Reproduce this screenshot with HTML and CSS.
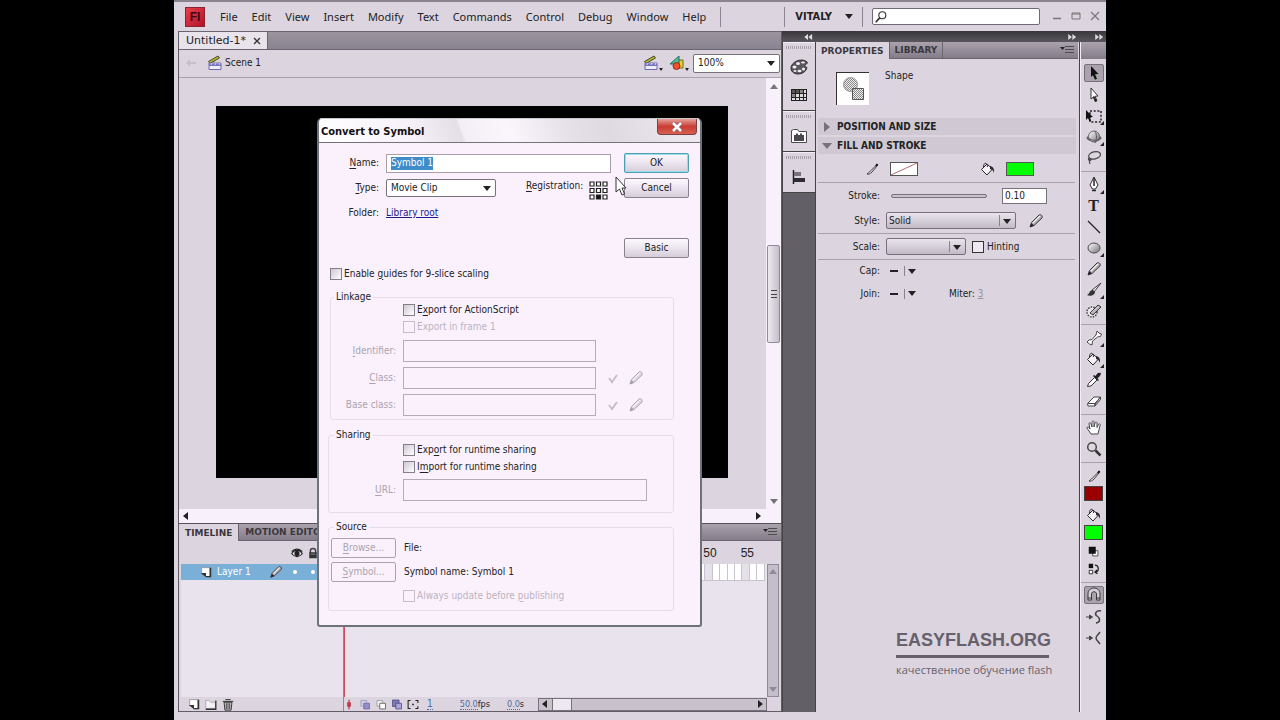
FILE: index.html
```
<!DOCTYPE html>
<html lang="en">
<head>
  <meta charset="UTF-8" />
  <meta name="viewport" content="width=device-width, initial-scale=1.0" />
  <title>Untitled-1 - Flash</title>
  <link rel="stylesheet" href="styles.css">
</head>
<body>
  <svg class="defs" aria-hidden="true">
    <defs>
      <linearGradient id="metal" x1="0" y1="0" x2="1" y2="1">
        <stop offset="0" stop-color="#fff" />
        <stop offset="1" stop-color="#77727a" />
      </linearGradient>
    </defs>
    <symbol id="i-clap" viewBox="0 0 16 16">
      <path d="M1.500 6.500L11 1l1.500 2L3 8.500z" fill="#b5b535" stroke="#4b4a20" />
      <path d="M2 8h12v6.500H2z" fill="#eeecff" stroke="#6c68ab" />
      <path d="M2 8.500h12v2.500H2z" fill="#7874bb" />
      <path d="M5 8l-1 2M9 8L8 10M13 8l-1 2" stroke="#d9d6f5" />
    </symbol>
    <symbol id="i-shapes" viewBox="0 0 16 16">
      <path d="M7 5h7v8H7z" fill="#e5cf37" stroke="#77691b" />
      <path d="M1 9L10 1v8z" fill="#4fc09a" stroke="#226d59" />
      <circle cx="7.500" cy="11" r="3.500" fill="#f0502e" stroke="#962a17" />
    </symbol>
    <symbol id="i-pencil" viewBox="0 0 16 16">
      <path d="M2 14l1.500-4.500L11 2c1.500-1 4 .5 3 3l-8 7.500z" fill="url(#metal)" stroke="#3a373c" />
      <path d="M2 14l1.500-4 2.500 2.500z" fill="#222" />
      <path d="M5 10l7-7" stroke="#fff" />
    </symbol>
    <symbol id="i-pen" viewBox="0 0 16 16">
      <path d="M3 13c1-1.500 2-1 4-3.500L12.500 4l1-.5-.5 1.500L8 11c-2 2-3.500 2.500-5 2z" fill="#eee" stroke="#39363b" />
      <path d="M12 5l1.500-2" stroke="#111" stroke-width="2" />
    </symbol>
    <symbol id="i-bucket" viewBox="0 0 16 16">
      <path d="M7 3l5.500 5L7 14 1.500 8.500z" fill="#f5f2f6" stroke="#2c292e" />
      <path d="M3.500 6c0-5 4-5 4 0" fill="none" stroke="#2c292e" />
      <path d="M10 5c3 .5 4.500 2.500 4 7-1-3-2-3.500-4-4z" fill="#2c292e" />
    </symbol>
    <symbol id="i-arrow" viewBox="0 0 16 16">
      <path d="M5 1l7.500 8-3.500.3 2 4.400-2 1-2-4.500L5 12z" fill="#111" />
    </symbol>
    <symbol id="i-subarrow" viewBox="0 0 16 16">
      <path d="M5 1l7 8-3 .3 2 4.400-1.500.8-2-4.500L5 12z" fill="#fff" stroke="#333" />
      <path d="M8 9l3 5-2 1-2-5z" fill="#222" />
    </symbol>
    <symbol id="i-transform" viewBox="0 0 16 16">
      <path d="M4 3h11v11H4z" fill="none" stroke="#222" stroke-width="1.500" stroke-dasharray="2 1.700" />
      <path d="M0 2l7 7-3 .3 1 3.500-1.500.7L2 10l-2 2z" fill="#111" />
    </symbol>
    <symbol id="i-sphere" viewBox="0 0 16 16">
      <ellipse cx="8" cy="9" rx="7" ry="3" fill="#aaa5ad" stroke="#4d494f" />
      <circle cx="8" cy="7.500" r="5.500" fill="url(#metal)" stroke="#6b676d" />
      <path d="M9 2c2 4 2 8 0 12M2 9c4 3 9 3 12 0" fill="none" stroke="#5d595f" />
    </symbol>
    <symbol id="i-lasso" viewBox="0 0 16 16">
      <ellipse cx="8.500" cy="5.500" rx="6" ry="3.500" fill="none" stroke="#4a474c" stroke-width="1.300" transform="rotate(-14 8 5)" />
      <path d="M3 8c-2 2 2 3.500 2 1.500S2 9 4 14" fill="none" stroke="#4a474c" stroke-width="1.200" />
    </symbol>
    <symbol id="i-nib" viewBox="0 0 16 16">
      <path d="M8 0l4 8-2.500 4h-3L4 8z" fill="#fff" stroke="#2b282d" />
      <path d="M8 1v6M6 13.500h4" stroke="#2b282d" stroke-width="1.500" />
      <circle cx="8" cy="8" r="1" fill="#222" />
    </symbol>
    <symbol id="i-line" viewBox="0 0 16 16"><path d="M2 2l12 12" stroke="#222" stroke-width="1.300" /></symbol>
    <symbol id="i-oval" viewBox="0 0 16 16"><ellipse cx="8" cy="8" rx="6" ry="5" fill="url(#metal)" stroke="#4b484d" /></symbol>
    <symbol id="i-brush" viewBox="0 0 16 16">
      <path d="M15 1L8 10 6 8z" fill="#f4f1f5" stroke="#3e3b40" />
      <path d="M7 8c-4 0-3 4-6 5 3 2 8 0 8-3z" fill="#333" />
    </symbol>
    <symbol id="i-spray" viewBox="0 0 16 16">
      <circle cx="6" cy="9" r="5" fill="#e9e5eb" stroke="#444" stroke-width="1.500" stroke-dasharray="1.500 1.200" />
      <path d="M4 10l8-8 3 2-8 8z" fill="url(#metal)" stroke="#39363b" />
    </symbol>
    <symbol id="i-bone" viewBox="0 0 16 16">
      <path d="M10 5l1-4 2 2 2.500 1-1 2.500-3 .5-5 4-.5 4-2.500-1L1 12l2-2 3-.5z" fill="#fff" stroke="#4c494e" />
    </symbol>
    <symbol id="i-dropper" viewBox="0 0 16 16">
      <path d="M1.500 14.500l1-3 6-6 2.500 2.500-6 6z" fill="#fff" stroke="#333" />
      <path d="M7 4l5 5 1-1-1.500-1.500C16 3 15 0 14 1c-1-1-3 0-4.500 3L8 3z" fill="#222" />
    </symbol>
    <symbol id="i-eraser" viewBox="0 0 16 16">
      <path d="M1.500 10.500L8 4h6.500L9 11v2H2z" fill="#fff" stroke="#48454a" />
      <path d="M2 10.500h7L14.500 4v2.500L9 13M9 10.500V13" fill="none" stroke="#48454a" />
    </symbol>
    <symbol id="i-hand" viewBox="0 0 16 16">
      <path d="M5 14L1 8c0-2 2-1 3 1L3 4c0-2 1.500-1.500 2 0l1 3V2.500c0-2 2-2 2 0V7l1-4c.5-2 2-1 2 0v4.500l1.500-3C13 3 14.500 4 14 5.500L12 14z" fill="#fff" stroke="#4a474c" />
    </symbol>
    <symbol id="i-zoom" viewBox="0 0 16 16">
      <circle cx="6" cy="6" r="4.300" fill="#dcd8de" stroke="#49464b" stroke-width="1.500" />
      <path d="M9.500 9.500l5 5" stroke="#353237" stroke-width="2.500" />
    </symbol>
    <symbol id="i-magnet" viewBox="0 0 16 16">
      <path d="M2 13V7c0-8 12-8 12 0v6h-3.500V7c0-3-5-3-5 0v6z" fill="#d5d0d7" stroke="#39363b" />
      <path d="M2 11h3.500M10.500 11H14" stroke="#39363b" />
    </symbol>
    <symbol id="i-smooth" viewBox="0 0 16 16">
      <path d="M0 8h6M3.500 6L6.500 8 3.500 10z" stroke="#444" fill="#444" />
      <path d="M15 2c-5-1-7 3-4 5s4 6-1 7" fill="none" stroke="#444" stroke-width="1.500" />
    </symbol>
    <symbol id="i-straight" viewBox="0 0 16 16">
      <path d="M0 8h6M3.500 6L6.500 8 3.500 10z" stroke="#444" fill="#444" />
      <path d="M14 2c-2 3-4 4-4 6s2 3 4 6" fill="none" stroke="#444" stroke-width="1.500" />
    </symbol>
    <symbol id="i-reset" viewBox="0 0 16 16">
      <path d="M6.500 6.500h6v6h-6z" fill="#fff" stroke="#444" /><path d="M2 2h8v8H2z" fill="#111" />
    </symbol>
    <symbol id="i-swap" viewBox="0 0 16 16">
      <path d="M2 2h5v5H2z" fill="#111" /><path d="M2.500 9.500h4v4h-4z" fill="#fff" stroke="#222" />
      <path d="M9 3.500c5 0 5 8 1 8M11.500 9L9 11.500l3 2" fill="none" stroke="#222" stroke-width="1.400" />
    </symbol>
    <symbol id="i-palette" viewBox="0 0 20 16">
      <path d="M2 10C1 3 13-2 18 3c2 2-3 2-2 4s3 0 1 4c-4 6-14 5-15-1z" fill="#5a565d" stroke="#2f2c31" />
      <g fill="#eee"><ellipse cx="5.500" cy="8" rx="2" ry="1.500" /><ellipse cx="9" cy="4.500" rx="2" ry="1.500" /><ellipse cx="14" cy="3.500" rx="2" ry="1" /><ellipse cx="6" cy="12" rx="1.500" ry="1" /><ellipse cx="10.500" cy="12" rx="2" ry="1.200" /><ellipse cx="14.500" cy="10" rx="1.500" ry="1.500" /></g>
    </symbol>
    <symbol id="i-swatches" viewBox="0 0 20 16">
      <path d="M2 2h16v12H2z" fill="#222" />
      <path d="M3 3h3v3H3zM7 3h3v3H7z" fill="#555" /><path d="M11 3h3v3h-3zM3 7h3v3H3z" fill="#888" />
      <path d="M15 3h2v3h-2zM7 7h3v3H7zM11 7h3v3h-3zM15 7h2v3h-2zM3 11h3v2H3zM7 11h3v2H7zM11 11h3v2h-3zM15 11h2v2h-2z" fill="#ddd" />
    </symbol>
    <symbol id="i-folder" viewBox="0 0 20 16">
      <path d="M2.500 14.500v-12l2-1h4l1.500 2h7.500v11z" fill="#fff" stroke="#4b484d" />
      <path d="M5 7h2V5.500h2V7h2V5.500h2V7h2v6H5z" fill="#4b484d" />
    </symbol>
    <symbol id="i-align" viewBox="0 0 20 16">
      <path d="M4.500 1v14" stroke="#222" stroke-width="1.500" /><path d="M5 3h7v4H5z" fill="#77737a" /><path d="M5 9h11v4H5z" fill="#2e2b33" />
    </symbol>
    <symbol id="i-page" viewBox="0 0 16 16">
      <path d="M3 3h10v10.500H8L3 9z" fill="#fff" stroke="#9a969c" />
      <path d="M2 9h6v5zM12 3h2v11H8v-1.500h4z" fill="#333" />
    </symbol>
    <symbol id="i-eye" viewBox="0 0 16 16">
      <path d="M1 9c3-6 11-6 14 0-4 5-10 5-14 0z" fill="#fff" stroke="#222" stroke-width="1.500" />
      <circle cx="8" cy="8.500" r="3.500" fill="#222" /><path d="M1 6c4-4 9-4 14 0" stroke="#222" stroke-width="1.500" fill="none" />
    </symbol>
    <symbol id="i-lock" viewBox="0 0 16 16">
      <path d="M4.500 8V5c0-4 7-4 7 0v3" fill="none" stroke="#444" stroke-width="2" /><path d="M3 7h10v8H3z" fill="#333" /><path d="M5 9h6v1H5z" fill="#999" />
    </symbol>
    <symbol id="i-dir" viewBox="0 0 16 16">
      <path d="M2 4h4l1.500 2H13v7H2z" fill="#f5f2f6" stroke="#aaa5ac" /><path d="M13.500 4v10H2" fill="none" stroke="#333" stroke-width="1.500" />
    </symbol>
    <symbol id="i-trash" viewBox="0 0 16 16">
      <path d="M3.500 6h9l-1 9h-7z" fill="#ddd" stroke="#222" /><path d="M2 5h12M5 3h6M6 7v7M8 7v7M10 7v7" stroke="#222" />
    </symbol>
    <symbol id="i-onion" viewBox="0 0 16 16">
      <path d="M3 3h7v7H3z" fill="#d4cfe6" stroke="#9c98b8" /><path d="M6.500 6.500h7v7h-7z" fill="#9490cd" stroke="#6b67a5" />
    </symbol>
    <symbol id="i-onion2" viewBox="0 0 16 16">
      <path d="M3 3h7v7H3z" fill="#eee" stroke="#999" /><path d="M6.500 6.500h7v7h-7z" fill="#fff" stroke="#555" />
    </symbol>
    <symbol id="i-onion3" viewBox="0 0 16 16">
      <path d="M2.500 2.500h8v8h-8z" fill="#7d79b5" stroke="#4f4c80" /><path d="M6.500 6.500h7v7h-7z" fill="#aaa6da" stroke="#4f4c80" />
    </symbol>
    <symbol id="i-markers" viewBox="0 0 16 16">
      <path d="M5 3H2v10h3M11 3h3v3M14 10v3h-3" fill="none" stroke="#222" stroke-width="1.300" /><path d="M7 7h2v2H7z" fill="#222" />
    </symbol>
    <symbol id="i-check" viewBox="0 0 16 16"><path d="M4 8l3 4 5-7" fill="none" stroke="#c5bec8" stroke-width="2" /></symbol>
    <symbol id="i-menu" viewBox="0 0 16 16">
      <path d="M1 5h5L3.500 8z" fill="#222" /><path d="M6 4.500h9M6 7.500h9M6 10.500h9" stroke="#4d4a50" />
    </symbol>
    <symbol id="i-left2" viewBox="0 0 16 16"><path d="M8 4v8L3 8zM13.500 4v8l-5-4z" fill="#ddd" /></symbol>
    <symbol id="i-right2" viewBox="0 0 16 16"><path d="M3 4v8l5-4zM8.500 4v8l5-4z" fill="#ddd" /></symbol>
  </svg>

  <div class="app">
    <header class="menubar">
      <div class="logo">Fl</div>
      <nav class="menu">
        <a href="#">File</a><a href="#">Edit</a><a href="#">View</a><a href="#">Insert</a><a href="#">Modify</a><a href="#">Text</a><a href="#">Commands</a><a href="#">Control</a><a href="#">Debug</a><a href="#">Window</a><a href="#">Help</a>
      </nav>
      <span class="divider"></span>
      <button class="workspace">VITALY <span class="down"></span></button>
      <label class="search">
        <svg viewBox="0 0 16 16"><circle cx="9.500" cy="6" r="4" fill="none" stroke="#333" stroke-width="1.300" /><path d="M6.500 9L2 14" stroke="#333" stroke-width="2" /></svg>
        <input type="text" aria-label="Search">
      </label>
      <div class="winbuttons">
        <button aria-label="Minimize"><svg viewBox="0 0 10 10"><path d="M1 7.500h8" stroke="#777" stroke-width="1.500" /></svg></button>
        <button aria-label="Maximize"><svg viewBox="0 0 10 10"><path d="M1 2h8v6H1zM1 3h8" fill="none" stroke="#777" /></svg></button>
        <button aria-label="Close"><svg viewBox="0 0 10 10"><path d="M1 1l8 8M9 1L1 9" stroke="#777" stroke-width="1.200" /></svg></button>
      </div>
    </header>

    <div class="main">
      <main class="work">
        <div class="doc-tabs">
          <div class="doc-tab">Untitled-1* <button aria-label="Close tab"><svg viewBox="0 0 10 10"><path d="M2 2l6 6M8 2L2 8" stroke="#333" stroke-width="1.300" /></svg></button></div>
        </div>
        <div class="editbar">
          <svg class="back" viewBox="0 0 16 16"><path d="M3 8l4-4v3h6v2H7v3z" fill="#c6bfc9" /></svg>
          <svg class="icon"><use href="#i-clap" /></svg>
          <span class="scene">Scene 1</span>
          <button class="drop"><svg class="icon"><use href="#i-clap" /></svg></button>
          <button class="drop"><svg class="icon"><use href="#i-shapes" /></svg></button>
          <span class="select zoom"><select aria-label="Zoom"><option>100%</option></select></span>
        </div>
        <div class="stage-area">
          <div class="stage-view"><div class="stage"></div></div>
          <div class="vscroll"><span class="up"></span><span class="thumb"></span><span class="down"></span></div>
        </div>
        <div class="hscroll"><span class="left"></span><span class="right"></span></div>

        <section class="timeline">
          <div class="tabs">
            <button class="tab active">TIMELINE</button><button class="tab">MOTION EDITOR</button>
            <svg class="icon menu-icon"><use href="#i-menu" /></svg>
          </div>
          <div class="tl-body">
            <div class="layers">
              <div class="layer-head"><svg class="icon"><use href="#i-eye" /></svg><svg class="icon"><use href="#i-lock" /></svg></div>
              <div class="layer"><svg class="icon"><use href="#i-page" /></svg><span>Layer 1</span><svg class="icon"><use href="#i-pencil" /></svg><i></i><i></i></div>
              <div class="layer-foot"><svg class="icon"><use href="#i-page" /></svg><svg class="icon"><use href="#i-dir" /></svg><svg class="icon"><use href="#i-trash" /></svg></div>
            </div>
            <div class="frames">
              <div class="ruler"><span>50</span><span>55</span></div>
              <div class="frame-area">
                <div class="frame-rows"><div class="frame-row"></div></div>
                <div class="vscroll small"><span class="up"></span><span class="down"></span></div>
              </div>
              <div class="frame-foot">
                <svg class="icon" viewBox="0 0 16 16"><path d="M8 2v12M6.500 6h3v4h-3z" fill="none" stroke="#c3364a" stroke-width="1.500" /></svg>
                <svg class="icon"><use href="#i-onion" /></svg>
                <svg class="icon"><use href="#i-onion2" /></svg>
                <svg class="icon"><use href="#i-onion3" /></svg>
                <svg class="icon"><use href="#i-markers" /></svg>
                <a href="#" class="hot">1</a>
                <span class="fps"><a href="#" class="hot">50.0</a>fps</span>
                <span class="secs"><a href="#" class="hot">0.0</a>s</span>
                <div class="fscroll"><span class="left"></span><span class="fthumb"></span><span class="right"></span></div>
              </div>
            </div>
          </div>
        </section>
      </main>

      <aside class="side">
        <div class="darkbar"><svg class="icon"><use href="#i-left2" /></svg><svg class="icon first"><use href="#i-right2" /></svg><svg class="icon"><use href="#i-right2" /></svg></div>
        <div class="side-cols">
          <div class="dock">
            <div class="dock-group">
              <button aria-label="Color"><svg><use href="#i-palette" /></svg></button>
              <button aria-label="Swatches"><svg><use href="#i-swatches" /></svg></button>
            </div>
            <div class="dock-group"><button aria-label="Project"><svg><use href="#i-folder" /></svg></button></div>
            <div class="dock-group"><button aria-label="Align"><svg><use href="#i-align" /></svg></button></div>
          </div>

          <section class="props">
            <div class="tabs">
              <button class="tab active">PROPERTIES</button><button class="tab">LIBRARY</button>
              <svg class="icon menu-icon"><use href="#i-menu" /></svg>
            </div>
            <div class="kind">
              <svg viewBox="0 0 33 33">
                <defs><pattern id="dots" width="2" height="2" patternUnits="userSpaceOnUse"><path d="M0 0h2v2H0z" fill="#eee" /><path d="M0 0h1v1H0zM1 1h1v1H1z" fill="#888" /></pattern></defs>
                <path d="M0 0h33v33H0z" fill="#fff" /><path d="M0 33V0h33" fill="none" stroke="#333" stroke-width="2" />
                <circle cx="14.500" cy="12.500" r="7" fill="url(#dots)" stroke="#999" /><path d="M16.500 16.500h11v11h-11z" fill="url(#dots)" stroke="#555" />
              </svg>
              <span>Shape</span>
            </div>
            <h2 class="section closed">POSITION AND SIZE</h2>
            <h2 class="section">FILL AND STROKE</h2>
            <div class="row swatches">
              <svg class="icon"><use href="#i-pen" /></svg>
              <button class="swatch none" aria-label="Stroke color"><svg viewBox="0 0 28 14" preserveAspectRatio="none"><path d="M0 14L28 0" stroke="#b05462" /></svg></button>
              <svg class="icon second"><use href="#i-bucket" /></svg>
              <button class="swatch green" aria-label="Fill color"></button>
            </div>
            <div class="row line"><label for="stroke">Stroke:</label><span class="slider"></span><input id="stroke" class="num" type="text" value="0.10"></div>
            <div class="row"><label for="style">Style:</label><span class="select gray wide"><select id="style"><option>Solid</option></select></span><svg class="icon edit"><use href="#i-pencil" /></svg></div>
            <div class="row line"><label for="scale">Scale:</label><span class="select gray"><select id="scale"><option></option></select></span><input id="hint" type="checkbox" class="dark"><label class="after" for="hint">Hinting</label></div>
            <div class="row line cap"><span class="lab">Cap:</span><button class="dash" aria-label="Cap"><i></i><b></b><span class="down"></span></button></div>
            <div class="row cap"><span class="lab">Join:</span><button class="dash" aria-label="Join"><i></i><b></b><span class="down"></span></button><span class="miter">Miter: <u>3</u></span></div>
            <div class="brand"><strong>EASYFLASH.ORG</strong><span lang="ru">качественное обучение flash</span></div>
          </section>

          <div class="tools">
            <div class="tools-head"></div>
            <div class="tool-group">
              <button class="on"><svg><use href="#i-arrow" /></svg></button>
              <button><svg><use href="#i-subarrow" /></svg></button>
              <button class="more"><svg><use href="#i-transform" /></svg></button>
              <button class="more"><svg><use href="#i-sphere" /></svg></button>
              <button><svg><use href="#i-lasso" /></svg></button>
            </div>
            <div class="tool-group">
              <button class="more"><svg><use href="#i-nib" /></svg></button>
              <button class="type">T</button>
              <button><svg><use href="#i-line" /></svg></button>
              <button class="more"><svg><use href="#i-oval" /></svg></button>
              <button><svg><use href="#i-pencil" /></svg></button>
              <button class="more"><svg><use href="#i-brush" /></svg></button>
              <button><svg><use href="#i-spray" /></svg></button>
            </div>
            <div class="tool-group">
              <button class="more"><svg><use href="#i-bone" /></svg></button>
              <button class="more"><svg><use href="#i-bucket" /></svg></button>
              <button><svg><use href="#i-dropper" /></svg></button>
              <button><svg><use href="#i-eraser" /></svg></button>
            </div>
            <div class="tool-group">
              <button><svg><use href="#i-hand" /></svg></button>
              <button><svg><use href="#i-zoom" /></svg></button>
            </div>
            <div class="tool-group colors">
              <button><svg><use href="#i-pen" /></svg></button>
              <button class="chip red" aria-label="Stroke color"></button>
              <button><svg><use href="#i-bucket" /></svg></button>
              <button class="chip green" aria-label="Fill color"></button>
              <button class="mini"><svg><use href="#i-reset" /></svg></button>
              <button class="mini"><svg><use href="#i-swap" /></svg></button>
            </div>
            <div class="tool-group">
              <button class="on"><svg><use href="#i-magnet" /></svg></button>
              <button><svg><use href="#i-smooth" /></svg></button>
              <button><svg><use href="#i-straight" /></svg></button>
            </div>
          </div>
        </div>
      </aside>
    </div>

    <form class="dialog" onsubmit="return false">
      <div class="dialog-title">
        <h1>Convert to Symbol</h1>
        <button class="close" aria-label="Close"><svg viewBox="0 0 12 10"><path d="M2 1l8 8M10 1L2 9" stroke="#8a5b62" stroke-width="4" /><path d="M2 1l8 8M10 1L2 9" stroke="#fff" stroke-width="2.500" /></svg></button>
      </div>
      <div class="dialog-body">
        <div class="top">
          <div class="fields">
            <div class="field"><label for="name"><u>N</u>ame:</label><div class="name-box"><input id="name" type="text" value="Symbol 1"></div></div>
            <div class="field"><label for="type"><u>T</u>ype:</label><span class="select type-list"><select id="type"><option>Movie Clip</option></select></span>
              <span class="reg"><u>R</u>egistration:</span>
              <svg class="reg-grid" viewBox="0 0 19 19"><g fill="#fff" stroke="#222" stroke-width="1.200"><path d="M1 1h4v4H1zM7.500 1h4v4h-4zM14 1h4v4h-4zM1 7.500h4v4H1zM7.500 7.500h4v4h-4zM14 7.500h4v4h-4zM1 14h4v4H1zM14 14h4v4h-4z" /><path d="M7.500 14h4v4h-4z" fill="#111" /></g></svg>
            </div>
            <div class="field"><span class="lab">Folder:</span><a href="#">Library root</a></div>
          </div>
          <div class="buttons">
            <button class="btn ok">OK</button>
            <button class="btn">Cancel</button>
            <button class="btn basic">Basic</button>
          </div>
        </div>
        <div class="check guides"><input id="slice" type="checkbox"><label for="slice">Enable <u>g</u>uides for 9-slice scaling</label></div>

        <fieldset class="linkage">
          <legend>Linkage</legend>
          <div class="check"><input id="as" type="checkbox"><label for="as">E<u>x</u>port for ActionScript</label></div>
          <div class="check off"><input id="f1" type="checkbox" disabled><label for="f1">Export in frame 1</label></div>
          <div class="entry ident"><label for="ident"><u>I</u>dentifier:</label><input id="ident" type="text" disabled></div>
          <div class="entry"><label for="class"><u>C</u>lass:</label><input id="class" type="text" disabled><svg class="icon"><use href="#i-check" /></svg><svg class="icon faded"><use href="#i-pencil" /></svg></div>
          <div class="entry"><label for="base">Base class:</label><input id="base" type="text" disabled><svg class="icon"><use href="#i-check" /></svg><svg class="icon faded"><use href="#i-pencil" /></svg></div>
        </fieldset>
        <fieldset class="sharing">
          <legend>Sharing</legend>
          <div class="check"><input id="ers" type="checkbox"><label for="ers">Exp<u>o</u>rt for runtime sharing</label></div>
          <div class="check"><input id="irs" type="checkbox"><label for="irs">I<u>m</u>port for runtime sharing</label></div>
          <div class="entry url"><label for="url"><u>U</u>RL:</label><input id="url" type="text" disabled></div>
        </fieldset>
        <fieldset class="source">
          <legend>Source</legend>
          <div class="src"><button class="btn" disabled><u>B</u>rowse...</button><span>File:</span></div>
          <div class="src"><button class="btn" disabled><u>S</u>ymbol...</button><span>Symbol name: Symbol 1</span></div>
          <div class="check off"><input id="upd" type="checkbox" disabled><label for="upd">Always update before <u>p</u>ublishing</label></div>
        </fieldset>
      </div>
      <svg class="cursor" viewBox="0 0 12 20"><path d="M1 1v15l3.500-3 2.500 6 2.500-1-2.500-6h4z" fill="#fff" stroke="#333" /></svg>
    </form>
  </div>

  <script>
    // the name is selected when the dialog opens
    document.getElementById('name').select();
  </script>
</body>
</html>
```
FILE: styles.css
```
* { box-sizing: border-box; }
body {
  margin: 0;
  background: #000;
  color: #222;
  font-family: "DejaVu Sans Condensed", "Noto Sans", sans-serif;
  font-size: 10px;
  line-height: 14px;
}
button, input, select { font: inherit; color: inherit; margin: 0; }
button { padding: 0; border: none; background: none; }
a { color: inherit; text-decoration: none; }
h1, h2 { margin: 0; font-size: 11px; }
svg { display: block; flex: none; }
.defs { position: absolute; width: 0; height: 0; }
.icon { width: 16px; height: 16px; }

/* little triangles */
.down, .up, .left, .right { width: 0; height: 0; border: 4px solid transparent; flex: none; }
.down { border-top: 5px solid #222; border-bottom: none; }
.up { border-bottom: 5px solid #777; border-top: none; }
.left { border-right: 5px solid #222; border-left: none; }
.right { border-left: 5px solid #222; border-right: none; }

.app {
  position: relative;
  display: flex;
  flex-direction: column;
  min-height: 100vh;
  margin: 0 174px;
  padding: 0 0 8px 4px;
  background: #dcd5e0;
  border-top: 2px solid #8c8391;
}

/* menu bar */
.menubar { display: flex; align-items: center; height: 29px; padding-left: 7px; }
.logo {
  width: 20px; height: 20px;
  margin-right: 15px;
  background: linear-gradient(135deg, #e8404c, #b3122a);
  border: 1px solid #8d2231;
  color: #3d0710;
  font: bold 12px/18px "Liberation Sans", sans-serif;
  text-align: center;
}
.menu { display: flex; gap: 14px; font: 11px/16px "Noto Sans", sans-serif; }
.divider { height: 20px; margin: 0 auto 0 14px; border-left: 1px solid #8d8592; }
.workspace {
  display: flex; align-items: center; gap: 13px;
  height: 20px; padding: 0 9px 0 10px;
  border-left: 1px solid #8d8592; border-right: 1px solid #8d8592;
  font-weight: bold; font-size: 11px;
}
.search {
  display: flex; align-items: center;
  width: 168px; height: 17px; margin-left: 9px; padding-left: 1px;
  background: #fff; border: 1px solid #6f6975; border-radius: 2px;
}
.search svg { width: 14px; height: 14px; }
.search input { width: 100%; border: none; background: none; outline: none; }
.winbuttons { display: flex; gap: 9px; padding: 0 6px 2px 12px; }
.winbuttons svg { width: 10px; height: 10px; }

.main { display: flex; flex: 1; }
.work { display: flex; flex-direction: column; flex: 1; min-width: 0; border: 1px solid #625c68; border-width: 0 1px 1px; }

.doc-tabs { display: flex; height: 19px; background: linear-gradient(#9c959f, #898290); border-top: 1px solid #6b6571; border-bottom: 1px solid #6b6571; }
.doc-tab { display: flex; align-items: center; gap: 6px; padding: 0 5px 0 7px; background: #e9e3ec; border-right: 1px solid #6b6571; font: 11px/16px "DejaVu Sans", sans-serif; }
.doc-tab svg { width: 10px; height: 10px; }

.editbar { display: flex; align-items: center; height: 28px; padding: 0 1px 1px 4px; border-bottom: 1px solid #aaa3ae; }
.back { width: 16px; height: 16px; margin-right: 8px; }
.scene { flex: 1; padding-left: 2px; }
.drop { position: relative; margin-right: 10px; }
.drop + .drop { margin-right: 8px; }
.drop::after { content: ""; position: absolute; right: -4px; bottom: 0; border: 2px solid transparent; border-top: 3px solid #222; border-bottom: none; }

.select { position: relative; display: inline-flex; }
.select select {
  width: 100%; height: 18px; padding: 0 4px;
  appearance: none; outline: none;
  background: #fff; border: 1px solid #77717c; border-radius: 2px;
}
.select::after { content: ""; position: absolute; right: 5px; top: 7px; border: 4px solid transparent; border-top: 5px solid #222; border-bottom: none; pointer-events: none; }
.zoom { width: 87px; }
.zoom select { height: 19px; }

.stage-area { display: flex; flex: 1; min-height: 300px; }
.stage-view { display: flex; flex: 1; padding: 28px 38px 31px 37px; }
.stage { flex: 1; background: #000; }
.vscroll {
  display: flex; flex-direction: column; align-items: center;
  width: 15px; padding: 6px 0 5px;
  background: #f8f1fb;
}
.vscroll .down { margin-top: auto; border-top-color: #77727a; }
.thumb {
  width: 13px; height: 98px; margin-top: 156px;
  background: linear-gradient(#444, #444) center / 6px 1px no-repeat, linear-gradient(#444, #444) center 44px / 6px 1px no-repeat, linear-gradient(#444, #444) center 51px / 6px 1px no-repeat, linear-gradient(90deg, #eee8f1, #c6bfca);
  border: 1px solid #918a96; border-radius: 2px;
}
.hscroll { display: flex; align-items: center; justify-content: space-between; height: 14px; padding: 0 20px 0 4px; background: #f8f1fb; }

/* panel tabs */
.tabs { display: flex; height: 17px; background: linear-gradient(#aaa3ae, #847d89); border-bottom: 1px solid #6b6571; }
.tab { padding: 0 5px; border-right: 1px solid #6b6571; color: #3b373e; font: bold 9px/16px "DejaVu Sans", sans-serif; }
.tab.active { background: #dcd5e0; margin-bottom: -1px; }
.menu-icon { margin-left: auto; margin-right: 3px; }

.timeline { display: flex; flex-direction: column; height: 188px; border-top: 1px solid #555; }
.timeline .tab { padding: 0 6px; }
.tl-body { display: flex; flex: 1; padding: 0 2px; }
.layers { display: flex; flex-direction: column; width: 163px; background: #e9e3ed; border-right: 1px solid #918a96; }
.layer-head, .ruler { display: flex; align-items: center; height: 23px; background: #dcd5e0; }
.layer-head { justify-content: flex-end; gap: 4px; padding-right: 24px; flex: none; }
.layer-head .icon { width: 12px; height: 12px; }
.layer { display: flex; align-items: center; height: 16px; padding-left: 18px; background: #7ab0d8; color: #fff; }
.layer .icon { width: 14px; height: 14px; }
.layer span { flex: 1; padding-left: 4px; }
.layer i { width: 4px; height: 4px; margin: 0 4px 0 10px; border-radius: 50%; background: #fff; }
.layer i:last-child { margin-right: 28px; }
.layer-foot { display: flex; align-items: center; gap: 3px; height: 14px; margin-top: auto; padding-left: 6px; background: #dcd5e0; }
.layer-foot .icon { width: 14px; height: 14px; }
.frames { display: flex; flex-direction: column; flex: 1; min-width: 0; }
.ruler { justify-content: flex-end; gap: 24px; padding-right: 25px; font: 12px/14px "Liberation Sans", sans-serif; color: #222; }
.frame-area { display: flex; flex: 1; }
.frame-rows { flex: 1; background: #e9e3ed; border-left: 1px solid #cf4b60; }
.frame-row {
  height: 17px; margin-right: 2px;
  border-bottom: 1px solid #c9c3cd;
  background: repeating-linear-gradient(270deg, #c9c3cd 0 1px, #fff 1px 8px, #c9c3cd 8px 9px, #fff 9px 15px, #c9c3cd 15px 16px, #e6e0ea 16px 23px, #c9c3cd 23px 24px, #fff 24px 30px, #c9c3cd 30px 31px, #fff 31px 37px);
}
.vscroll.small { width: 12px; background: #c4bec8; border: 1px solid #918a96; padding: 4px 0; }
.small .up { border-bottom-color: #918a96; }
.small .down { border-top-color: #918a96; }
.frame-foot { display: flex; align-items: center; height: 14px; padding-right: 12px; }
.frame-foot .icon { width: 16px; height: 13px; flex: none; }
.frame-foot .icon:first-child { margin-left: -3px; }
.hot { color: #4a6ea5; border-bottom: 1px dotted #4a6ea5; line-height: 11px; }
.frame-foot > .hot { margin-left: 6px; }
.fps { margin-left: 27px; font-size: 9px; }
.secs { margin-left: 17px; font-size: 9px; }
.fscroll { display: flex; align-items: center; flex: 1; height: 13px; margin-left: 14px; padding: 0 3px; background: #c9c2cd; border: 1px solid #77717c; }
.fthumb { width: 20px; height: 11px; margin: 0 auto 0 5px; background: #eee8f1; border: 1px solid #77717c; border-width: 0 1px; }

/* right side */
.side { display: flex; flex: none; flex-direction: column; width: 324px; }
.darkbar { display: flex; align-items: center; height: 11px; background: linear-gradient(#39363b, #5a565d); }
.darkbar .icon { width: 12px; height: 12px; margin-left: 20px; }
.darkbar .icon.first { margin-left: auto; }
.darkbar .icon:last-child { margin: 0 1px 0 15px; }
.side-cols { display: flex; flex: 1; }
.dock { flex: none; width: 34px; background: #625f66; border-left: 1px solid #444; border-right: 1px solid #444; }
.dock-group {
  padding: 14px 0 5px;
  background: repeating-linear-gradient(90deg, #aaa3ae 0 1px, transparent 1px 2px) 3px 3px / 26px 3px no-repeat, #dcd5e0;
  border-top: 1px solid #f4eff6; border-bottom: 1px solid #444;
}
.dock-group button { display: block; margin: 0 auto; }
.dock-group button + button { margin-top: 8px; }
.dock-group svg { width: 20px; height: 20px; }

.props { display: flex; flex-direction: column; flex: 1; min-width: 0; padding-right: 1px; border-right: 1px solid #444; }
.kind { display: flex; gap: 16px; height: 59px; padding: 13px 0 0 20px; }
.kind svg { width: 33px; height: 33px; }
.kind span { margin-top: -3px; }
.section {
  display: flex; align-items: center; gap: 5px;
  height: 17px; margin: 0 2px 2px; padding-left: 4px;
  background: #d0c9d4;
  color: #222; font: bold 10px/17px "DejaVu Sans Condensed", sans-serif;
}
.section::before { content: ""; border: 5px solid transparent; border-top: 6px solid #77727a; border-bottom: none; }
.section.closed::before { border: 5px solid transparent; border-left: 6px solid #77727a; border-right: none; margin: 0 2px; }
.row { display: flex; align-items: center; height: 25px; margin: 0 3px 0 2px; }
.row.line { height: 26px; border-top: 1px solid #a9a2ad; }
.row label, .row .lab { width: 62px; text-align: right; }
.row label.after { width: auto; padding-left: 3px; }
.swatches { height: 26px; padding-left: 46px; }
.swatches .second { margin-left: 62px; }
.swatch { width: 28px; height: 14px; margin-left: 10px; background: #fff; border: 1px solid #555; }
.swatch svg { width: 26px; height: 12px; }
.swatch.green, .chip.green { background: #0f0; }
.slider { width: 96px; height: 4px; margin: 0 15px 0 11px; border: 1px solid #77717c; border-radius: 2px; background: #c9c2cd; }
.num { width: 45px; height: 16px; padding: 0 2px; border: 1px solid #77717c; background: #fff; }
.gray { width: 80px; margin-left: 6px; }
.gray.wide { width: 130px; }
.gray select { height: 17px; padding: 0 2px; background: linear-gradient(#eae4ed, #c2bbc6); }
.gray::before { content: ""; position: absolute; right: 16px; top: 3px; height: 11px; border-left: 1px solid #88828d; }
.edit { margin-left: 12px; }
.row input.dark { margin-left: 6px; border-color: #333; }
.row.cap { height: 23px; }
.dash { display: flex; align-items: center; gap: 6px; margin-left: 10px; }
.dash i { width: 8px; height: 2px; background: #222; }
.dash b { height: 10px; border-left: 1px solid #88828d; }
.dash .down { margin-left: -3px; }
.miter { margin-left: 33px; }
.miter u { color: #99929d; }
.brand { margin: auto 20px 30px 80px; color: #67616c; font: 11px/24px "Open Sans", sans-serif; white-space: nowrap; }
.brand strong { display: block; width: 153px; border-bottom: 3px solid #67616c; font: bold 18px/30px "Liberation Sans", sans-serif; }

input[type=checkbox] {
  appearance: none;
  width: 12px; height: 12px;
  background: linear-gradient(135deg, #cfc8d3, #fff);
  border: 1px solid #857f8a;
}
.row input[type=checkbox] { background: #eee8f1; }

/* tools */
.tools { flex: none; width: 26px; border-left: 1px solid #f4eff6; }
.tools-head { height: 17px; margin-bottom: 2px; background: linear-gradient(#aaa3ae, #847d89); }
.tool-group { display: flex; flex-direction: column; align-items: center; padding: 2px 0 3px; }
.tool-group + .tool-group { border-top: 1px solid #aaa3ae; }
.tool-group button { position: relative; display: flex; align-items: center; justify-content: center; width: 20px; height: 21px; }
.tool-group svg { width: 16px; height: 16px; }
.tool-group .on { height: 18px; margin: 1px 0 2px; background: #aaa3ae; border: 1px solid #77717c; border-radius: 2px; }
.more::after { content: ""; position: absolute; right: 0; bottom: 1px; border: 2px solid transparent; border-right-color: #222; border-bottom-color: #222; }
.tool-group .type { font: bold 16px/20px "Liberation Serif", serif; }
.tool-group.colors { padding-bottom: 5px; }
.colors .chip { height: 15px; width: 19px; border: 1px solid #444; margin-bottom: 3px; }
.red { background: #900; }
.colors .mini { height: 17px; }
.colors .mini svg { width: 14px; height: 14px; }

/* dialog window */
.dialog {
  position: absolute;
  left: 143px; top: 116px;
  width: 385px;
  background: #fbf1fd;
  border: 2px solid #6d737b;
  border-top: 1px solid #c9c5cc;
  border-radius: 5px 5px 3px 3px;
  color: #222;
}
.dialog-title {
  display: flex; justify-content: space-between;
  height: 24px; padding: 0 3px 0 2px;
  background: linear-gradient(70deg, #fff, #f6f1f8 25%, #e4dee7 37%, #f4eff6 38%, #fbf6fc 50%, #e6e0e9 65%, #dfd9e2 75%, #eee9f0);
  border-bottom: 1px solid #77727a;
  border-radius: 4px 4px 0 0;
}
.dialog-title h1 { color: #111; line-height: 26px; }
.close { display: flex; align-items: center; justify-content: center; width: 40px; height: 16px; background: linear-gradient(#e5a29b, #c83c34 50%, #d9604f); border: 1px solid #7b4046; border-top: none; border-radius: 0 0 4px 4px; }
.close svg { width: 12px; height: 10px; }
.dialog-body { padding: 10px 11px 14px 9px; }
.dialog u { text-underline-offset: 2px; }
.top { display: flex; justify-content: space-between; }
.fields { flex: 1; }
.field { display: flex; align-items: center; height: 20px; margin-bottom: 5px; }
.field label, .field .lab { width: 51px; margin-right: 7px; text-align: right; }
.field a { color: #1b1b8f; text-decoration: underline; }
.name-box { width: 225px; height: 19px; padding: 2px 4px; background: #fff; border: 1px solid #a7a0ab; }
.name-box input { display: block; width: 100%; height: 13px; padding: 0; border: none; outline: none; background: none; }
.name-box input::selection { background: #3f8cc9; color: #fff; }
.type-list { width: 110px; }
.reg { margin: 0 6px 4px 30px; }
.reg-grid { width: 19px; height: 19px; margin-top: 4px; }
.buttons { display: flex; flex-direction: column; gap: 5px; width: 65px; }
.btn { width: 65px; height: 20px; background: linear-gradient(#fdf8fe, #ece5ef 50%, #d5ceda); border: 1px solid #88828d; border-radius: 2px; }
.btn.ok { border-color: #4fa0b5; box-shadow: inset 0 0 0 1px #9bdce8; }
.btn.basic { margin-top: 35px; }
.btn:disabled { background: none; color: #aaa3ad; border-color: #aaa3ad; }
.check { display: flex; align-items: center; gap: 2px; height: 17px; }
.check.off { color: #bbb3be; }
.check.off input { background: none; border-color: #c5bec8; }
.guides { margin-top: 7px; padding-left: 2px; }
fieldset { margin: 0 15px 0 0; padding: 0; min-width: 0; border: 1px solid #e6dde9; border-radius: 3px; }
legend { margin-left: 5px; padding: 0 2px; }
fieldset .check { padding-left: 74px; }
.linkage { margin: 8px 15px 0 2px; padding-bottom: 1px; }
.linkage legend { margin-left: 3px; }
.linkage legend + .check { margin-top: -3px; }
.linkage .check { padding-left: 72px; }
.entry { display: flex; align-items: center; height: 27px; color: #aaa3ad; }
.entry label { width: 67px; margin-right: 7px; text-align: right; }
.linkage .entry label { width: 65px; }
.entry input { width: 193px; height: 22px; margin-right: 9px; border: 1px solid #b3acb6; background: none; }
.entry .icon { margin-right: 7px; }
.entry.ident { margin-top: 2px; }
.faded { opacity: .4; }
.entry.url input { width: 244px; }
.entry.url { height: 30px; }
.sharing { margin-top: 8px; padding-bottom: 7px; }
.sharing legend + .check { margin-top: -1px; }
.source { margin-top: 7px; padding: 2px 0 6px; }
.src { display: flex; align-items: center; gap: 8px; height: 24px; padding-left: 2px; }
.source .check { margin-top: 3px; }
.cursor { position: absolute; left: 296px; top: 57px; width: 12px; height: 20px; }
```
